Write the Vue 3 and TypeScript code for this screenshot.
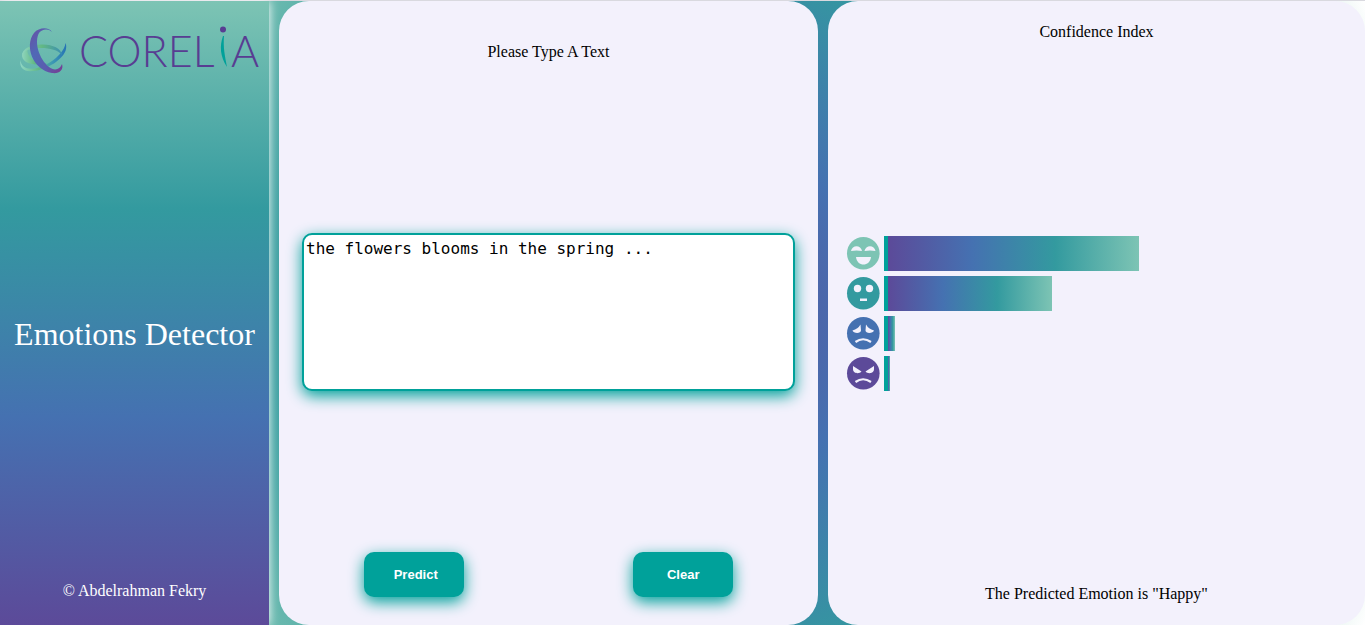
<script setup lang="ts">
import { ref } from 'vue'

interface Emotion {
  name: string
  color: string
  width: number
}

const text = ref('the flowers blooms in the spring ...')
const emotions: Emotion[] = [
  { name: 'Happy', color: '#7dc4b4', width: 251 },
  { name: 'Neutral', color: '#339a9f', width: 164 },
  { name: 'Sad', color: '#4571b1', width: 7 },
  { name: 'Angry', color: '#5c4a99', width: 2 },
]
</script>

<template>
  <div class="app">
    <aside class="side">
      <svg class="logo" viewBox="0 1 269 80" role="img" aria-label="Corelia">
        <defs>
          <linearGradient id="crescent" x1="0" y1="0" x2="1" y2="1">
            <stop offset="0" stop-color="#6a4fa3" />
            <stop offset=".35" stop-color="#5068b6" />
            <stop offset=".7" stop-color="#5b5cae" />
            <stop offset="1" stop-color="#7a3a8e" />
          </linearGradient>
          <linearGradient id="orbit" x1="0" y1="0" x2="1" y2="0">
            <stop offset="0" stop-color="#8fd6c4" />
            <stop offset=".4" stop-color="#62b884" />
            <stop offset=".7" stop-color="#3c98b4" />
            <stop offset="1" stop-color="#2673b5" />
          </linearGradient>
          <linearGradient id="ring" x1="0" y1="0" x2="1" y2="0">
            <stop offset="0" stop-color="#8ed4bc" />
            <stop offset=".5" stop-color="#62b884" />
            <stop offset="1" stop-color="#3b8fb0" />
          </linearGradient>
        </defs>
        <path fill="url(#orbit)" d="M20.500 60C19 68 24 72 33 71C47 70 64 59 66 49C66.500 46 66 44 65.500 43C65 50 56 60 45 65C33 71 21 70 20.500 60Z" />
        <path fill="url(#ring)" d="M28 48C21 51 20 58 26 62C31 65 40 65 47 63C40 63 33 61 30 57C27 53 27 50 28 48Z" />
        <path fill="url(#ring)" d="M22 56C22 48 32 44 43 44.500C53 45 61 48 62 55C58 50 50 48 41 48C31 48 24 50 22 56Z" />
        <path fill="url(#crescent)" d="M52 32C49 27 39 27 34 33C24 46 33 70 52 73C59 74 64 70 62 64C60 70 54 71 49 67C39 59 34 42 39 33C42 29 48 28 52 32Z" />
        <text class="wordmark" x="79" y="67">COREL</text>
        <text class="wordmark" x="231" y="67">A</text>
        <circle cx="223" cy="29.500" r="3" fill="#583d92" />
        <path fill="#00a19a" d="M223 36C219.500 46 220 56 227 67C225 56 223 48 224 36Z" />
      </svg>
      <h1>Emotions Detector</h1>
      <footer>© Abdelrahman Fekry</footer>
    </aside>

    <main class="panel entry">
      <label for="source">Please Type A Text</label>
      <textarea id="source" v-model="text" spellcheck="false"></textarea>
      <div class="actions">
        <button type="button" class="predict">Predict</button>
        <button type="button" @click="text = ''">Clear</button>
      </div>
    </main>

    <section class="panel result">
      <h2>Confidence Index</h2>
      <ul>
        <li v-for="(e, i) in emotions" :key="e.name">
          <svg class="face" viewBox="0 0 34 34" role="img" :aria-label="e.name">
            <circle cx="17.300" cy="17.300" r="16.300" :fill="e.color" />
            <g v-if="i === 0" fill="#f3f1fc">
              <path d="M5 15C6 8.500 15 8.500 16 15Q10.500 14 5 15ZM18.500 15C19.500 8.500 28.500 8.500 29.500 15Q24 14 18.500 15ZM10 21H25C24 31 11 31 10 21Z" />
            </g>
            <g v-else-if="i === 1" fill="#f3f1fc">
              <circle cx="11.500" cy="12.500" r="3.700" />
              <circle cx="23.500" cy="12.500" r="3.700" />
              <path d="M14 22.500H21V25H14Z" />
            </g>
            <g v-else-if="i === 2" fill="#f3f1fc">
              <path d="M14.500 8.500Q12 13 6.500 14.500C7 17.500 15 18 15 14.500ZM20 8.500Q22.500 13 28 14.500C27.500 17.500 19.500 18 19.500 14.500Z" />
              <path d="M9.500 26Q17 20.500 25 26" fill="none" stroke="#f3f1fc" stroke-width="2.200" />
            </g>
            <g v-else fill="#f3f1fc">
              <path d="M7 10L15.500 15.500C13.500 18 7 18 7 13ZM28 10L19.500 15.500C21.500 18 28 18 28 13Z" />
              <path d="M9.500 26Q17 20.500 25 26" fill="none" stroke="#f3f1fc" stroke-width="2.200" />
            </g>
          </svg>
          <span class="bar" :style="{ width: e.width + 'px' }"></span>
        </li>
      </ul>
      <p>The Predicted Emotion is "Happy"</p>
    </section>
  </div>
</template>

<style scoped>
.app {
  box-sizing: border-box;
  min-height: 100vh;
  display: grid;
  grid-template-columns: 269px 539fr 537fr;
  column-gap: 10px;
  border-top: 1px solid #d9d9df;
  background: radial-gradient(circle, #5c4a99, #4571b1, #339a9f, #7dc4b4, #fff);
  font-family: "Liberation Serif", "Times New Roman", serif;
  font-size: 16px;
  color: #000;
}
.side {
  display: flex;
  flex-direction: column;
  justify-content: space-between;
  align-items: center;
  color: #fff;
  background: linear-gradient(#7dc4b4, #339a9f, #4571b1, #5c4a99);
  box-shadow: 0 0 10px #fff;
}
.logo {
  display: block;
  width: 100%;
}
.wordmark {
  font: 300 43px Lato, sans-serif;
  fill: #583d92;
}
h1 {
  margin: 0;
  padding-top: 6px;
  font-size: 32px;
  line-height: 36px;
  font-weight: 400;
}
footer {
  padding-bottom: 24px;
  line-height: 20px;
}
.panel {
  display: flex;
  flex-direction: column;
  justify-content: space-between;
  background: #f3f1fc;
  border-radius: 30px;
  min-width: 0;
}
.entry {
  padding: 40px 0 28px;
}
.entry label {
  text-align: center;
  line-height: 22px;
}
textarea {
  box-sizing: border-box;
  height: 158px;
  margin: 8px 23px 0;
  padding: 2px;
  border: 2px solid #00a19a;
  border-radius: 10px;
  outline: none;
  resize: none;
  background: #fff;
  color: #000;
  font: 16px/24px "DejaVu Sans Mono", monospace;
  box-shadow: 0 5px 15px #00a19a;
}
.actions {
  display: grid;
  grid-template-columns: 1fr 1fr;
  justify-items: center;
}
button {
  width: 100px;
  height: 45px;
  padding: 0;
  border: 0;
  border-radius: 10px;
  background: #00a19a;
  color: #fff;
  font: bold 13px "Liberation Sans", Arial, sans-serif;
  box-shadow: 0 5px 15px #00a19a;
}
.predict {
  padding-left: 4px;
}
.result {
  padding: 20px 0;
}
h2,
p {
  margin: 0;
  font-size: 16px;
  line-height: 22px;
  font-weight: 400;
  text-align: center;
}
ul {
  margin: 0;
  padding: 0 18px;
  list-style: none;
  display: grid;
  gap: 5px;
}
li {
  display: flex;
  align-items: center;
  gap: 4px;
  height: 35px;
}
.face {
  width: 34px;
  height: 34px;
}
.bar {
  height: 35px;
  border-left: 4px solid #00a19a;
  background: linear-gradient(90deg, #5c4a99, #4571b1, #339a9f, #7dc4b4);
}
</style>

<style>
body {
  margin: 0;
}
</style>
